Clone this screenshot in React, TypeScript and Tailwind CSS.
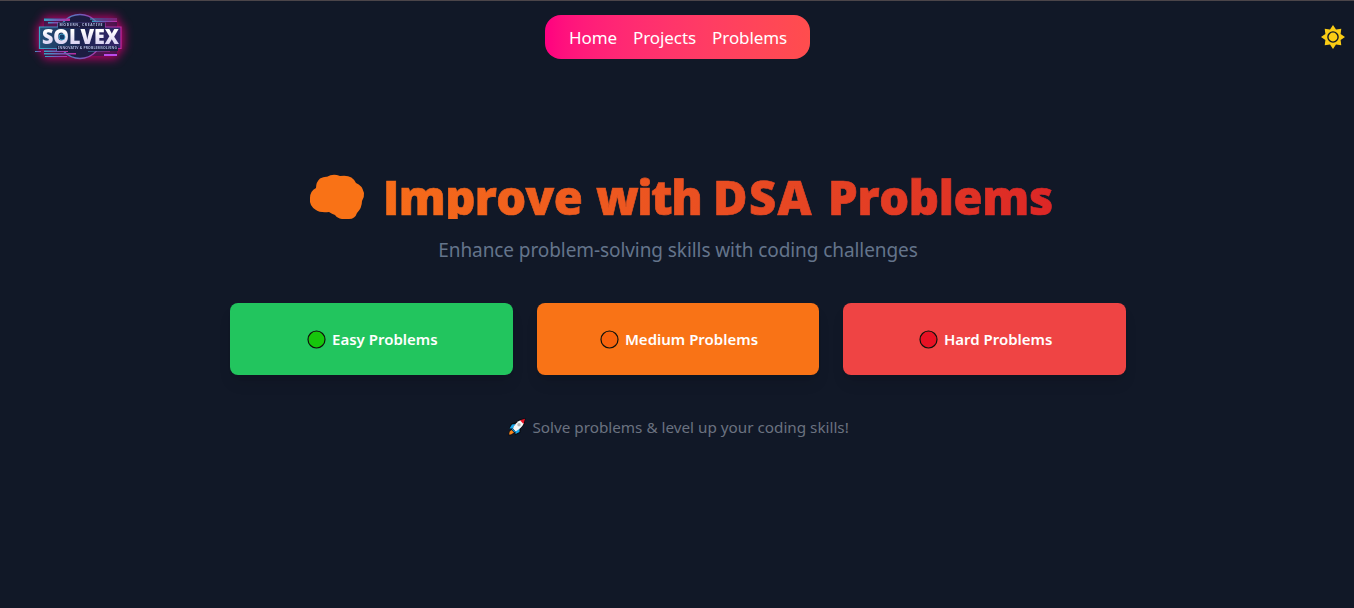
import React from 'react';

function Logo() {
  return (
    <svg width="120" height="72" viewBox="0 0 120 72" className="block overflow-visible">
      <defs>
        <linearGradient id="frame" x1="0" x2="1">
          <stop offset="0" stopColor="#35a5c4" />
          <stop offset="0.55" stopColor="#7358b8" />
          <stop offset="1" stopColor="#c22aa0" />
        </linearGradient>
        <linearGradient id="panel" x1="0" x2="1">
          <stop offset="0" stopColor="#235078" />
          <stop offset="0.5" stopColor="#1b2450" />
          <stop offset="1" stopColor="#35256a" />
        </linearGradient>
        <linearGradient id="letters" x1="0" x2="0" y1="0" y2="1">
          <stop offset="0.3" stopColor="#ffffff" />
          <stop offset="1" stopColor="#c9bdec" />
        </linearGradient>
        <filter id="glow" x="-30%" y="-50%" width="160%" height="200%">
          <feGaussianBlur stdDeviation="5" />
        </filter>
        <filter id="soft">
          <feGaussianBlur stdDeviation="0.4" />
        </filter>
      </defs>
      <g filter="url(#glow)" fill="#c4006c" opacity="0.9">
        <rect x="17" y="24" width="87" height="26" />
        <rect x="23" y="15" width="75" height="43" />
      </g>
      <g filter="url(#soft)">
        <rect x="24" y="17" width="73" height="38" fill="#1d1a45" opacity="0.6" />
        <circle cx="60" cy="35.500" r="22" fill="#1a1c42" stroke="url(#frame)" strokeWidth="1.3" />
        <g fill="url(#frame)">
          <rect x="24" y="17.500" width="26" height="2.5" />
          <rect x="28" y="21" width="12" height="1.5" />
          <rect x="70" y="17.500" width="27" height="1" />
          <rect x="72" y="19.500" width="25" height="1.500" />
          <rect x="24" y="49.500" width="24" height="1.5" />
          <rect x="24" y="52" width="32" height="1.5" />
          <rect x="25" y="55" width="22" height="1" />
          <rect x="68" y="49.500" width="22" height="1" />
          <rect x="84" y="53" width="13" height="2" fill="#b94bea" />
          <rect x="15" y="50" width="6" height="1" />
        </g>
        <path d="M19.500 26H38V22H85V26H101V47.500H97V49.500H37V47.500H19.500Z" fill="url(#panel)" stroke="url(#frame)" strokeWidth="1.2" />
        <path d="M38 21.500H85V27H38ZM37 45H98V50H37Z" fill="#1a1d42" />
        <text x="39.500" y="25.200" fontSize="3.400" textLength="43" fontFamily="Noto Sans" fontWeight="700" fill="#b7bfe4">MODERN, CREATIVE</text>
        <text x="22" y="43.300" fontSize="20.500" textLength="77" lengthAdjust="spacingAndGlyphs" fontFamily="Open Sans" fontWeight="800" fill="url(#letters)">SOLVEX</text>
        <circle cx="42" cy="36" r="3" fill="#183c6c" stroke="#48b3d8" strokeWidth="0.8" />
        <text x="38" y="48.200" fontSize="3.400" textLength="59" fontFamily="Noto Sans" fontWeight="700" fill="#a9b2dc">INNOVATIV &amp; PROBLEMSOLVING</text>
      </g>
    </svg>
  );
}

function Sun() {
  return (
    <svg width="24" height="24" viewBox="-12 -12 24 24">
      <path fill="#facc15" d="M0-12L3-7.600L8.300-8.300L7.600-3L12 0L7.600 3L8.300 8.300L3 7.600L0 12L-3 7.600L-8.300 8.300L-7.600 3L-12 0L-7.600-3L-8.300-8.300L-3-7.600Z" />
      <circle r="5.100" fill="#facc15" stroke="#111827" strokeWidth="1.400" />
    </svg>
  );
}

function Rocket() {
  return (
    <svg width="18" height="18" viewBox="0 0 18 18" className="shrink-0">
      <path d="M1 11L3 5.500L8 4L11 1.500L17.500 0L16.500 6.500L13 10L12.500 14.500L7 17.500L6.500 14.500L3 17.500H0.500L1 13.500L4 11Z" fill="#090b10" />
      <path d="M1.500 10.500L4 6.500L7.500 6L5 10.500ZM7.500 16V12.500L11.500 10V14Z" fill="#17a8ec" />
      <path d="M5 10.500Q7.500 4 13 2L16 5Q13.500 10.500 7.500 13.500Z" fill="#f6f6f6" />
      <path d="M12 2.300L17 0.700L15.500 6Z" fill="#e81224" />
      <circle cx="11" cy="6.800" r="1.700" fill="#b5b5b5" />
      <path d="M3.500 12L6 14.500L3 16.500H1L1.700 13.500Z" fill="#f7831b" />
      <path d="M4.500 10.500L7.500 13.500L6.500 14.200L3.800 11.500Z" fill="#1691d2" />
    </svg>
  );
}

const levels = [
  { label: 'Easy Problems', card: 'bg-[#22c55e]', dot: '#16c60c' },
  { label: 'Medium Problems', card: 'bg-[#f97316]', dot: '#f7630c' },
  { label: 'Hard Problems', card: 'bg-[#ef4444]', dot: '#e81224' },
];

export default function App() {
  return (
    <div className="flex h-[608px] flex-col border-t border-[#4b4549] bg-[#111827] font-['Noto_Sans',sans-serif]">
      <header className="grid h-[72px] grid-cols-[1fr_auto_1fr] items-center pr-[9px] pl-5">
        <Logo />
        <nav className="mr-[10px] flex h-11 w-[265px] items-center gap-4 rounded-2xl bg-gradient-to-r from-[#ff0080] to-[#ff4d4d] px-6 pt-px text-[17px] leading-7 tracking-[-0.08px] whitespace-nowrap text-white">
          <a>Home</a>
          <a>Projects</a>
          <a>Problems</a>
        </nav>
        <div className="justify-self-end">
          <Sun />
        </div>
      </header>
      <main className="flex flex-col items-center pt-[98px] pl-[2px]">
        <h1 className="flex h-12 w-[750px] bg-gradient-to-r from-[#f97316] to-[#dc2626] bg-clip-text pl-[6px] font-['Open_Sans',sans-serif] text-[47px] leading-[52px] font-extrabold whitespace-nowrap text-transparent [-webkit-text-stroke:0.7px_transparent]">
          <svg width="56" height="48" viewBox="0 0 56 48" className="mr-[18px] shrink-0">
            <path d="M11 7.500Q15 5.500 18 5.800Q24 2 31 5Q43 3 47 12Q53 14 55 22Q55.500 26 53 30Q53 37 48 42Q46 48 40 48H33Q28 47 26 44Q23 43 20 41Q11 42 7 39Q0 35 1 27Q1 20 7 17Q7 11 11 7.500Z" fill="#f97216" />
          </svg>
          <span className="w-[213px] shrink-0 tracking-[-0.6px]">Improve </span>
          <span className="w-[117px] shrink-0 tracking-[-1.5px]">with </span>
          <span className="w-[115px] shrink-0 tracking-[1.4px]">DSA </span>
          <span className="tracking-[-0.3px]">Problems</span>
        </h1>
        <p className="mt-[17px] text-[19px] leading-7 tracking-[-0.08px] whitespace-nowrap text-[#64748b]">Enhance problem-solving skills with coding challenges</p>
        <div className="mt-[39px] grid w-[896px] grid-cols-3 gap-6">
          {levels.map((level) => (
            <button key={level.label} className={`flex h-[72px] items-center justify-center gap-[6px] rounded-lg pl-[2px] shadow-lg ${level.card}`}>
              <svg width="19" height="19" viewBox="0 0 19 19">
                <circle cx="9.500" cy="9.500" r="8.500" fill={level.dot} stroke="#10120c" strokeWidth="1.200" />
              </svg>
              <span className="text-[15px] leading-6 font-semibold whitespace-nowrap text-white">{level.label}</span>
            </button>
          ))}
        </div>
        <div className="mt-10 flex w-[341px] items-center gap-[7px] text-[15.25px] leading-6 whitespace-nowrap text-[#6b7280]">
          <Rocket />
          <span>Solve problems &amp; level up your coding skills!</span>
        </div>
      </main>
    </div>
  );
}
